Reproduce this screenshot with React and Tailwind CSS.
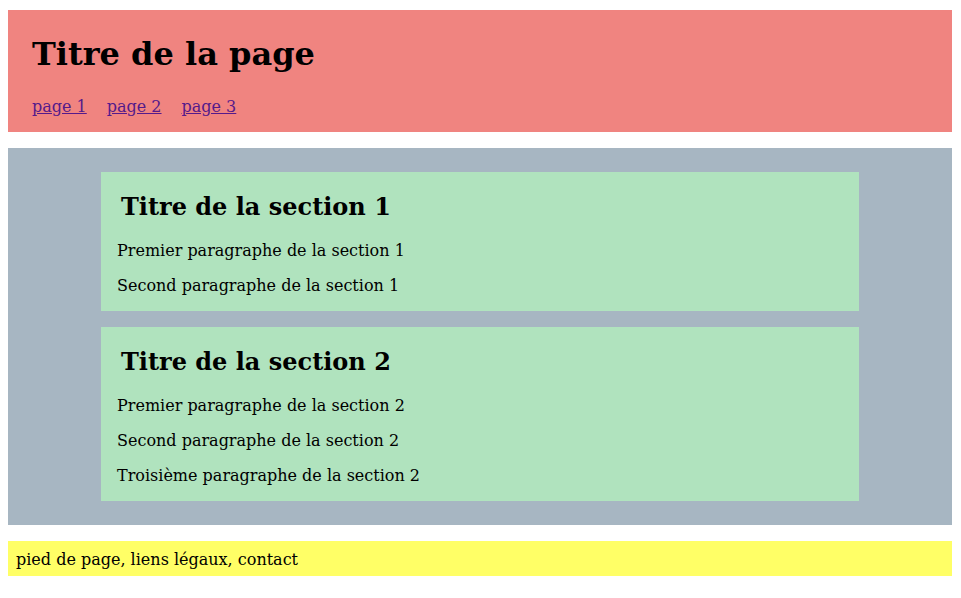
import React from 'react';

const sections = [
  {
    title: 'Titre de la section 1',
    paragraphs: ['Premier paragraphe de la section 1', 'Second paragraphe de la section 1'],
  },
  {
    title: 'Titre de la section 2',
    paragraphs: [
      'Premier paragraphe de la section 2',
      'Second paragraphe de la section 2',
      'Troisième paragraphe de la section 2',
    ],
  },
];

const Section = ({ title, paragraphs }) => (
  <section className="bg-[#b0e3be] px-4 pt-[21px] pb-4">
    <h2 className="pl-1 text-[24px] leading-[28px] font-bold mb-5">{title}</h2>
    <div className="flex flex-col gap-4">
      {paragraphs.map((p) => (
        <p key={p} className="text-[16px] leading-[19px]">{p}</p>
      ))}
    </div>
  </section>
);

export default function App() {
  return (
    <div className="bg-white min-h-[598px] pt-[10px] pl-2 pr-[9px] text-black font-['DejaVu_Serif',serif] flex flex-col gap-4">
      <header className="bg-[#f08480] px-6 pt-[26px] pb-4">
        <h1 className="text-[32px] leading-[37px] font-bold mb-6">Titre de la page</h1>
        <nav className="flex gap-5 text-[16px] leading-[19px]">
          <a href="#" className="text-[#551a8b] underline">page 1</a>
          <a href="#" className="text-[#551a8b] underline">page 2</a>
          <a href="#" className="text-[#551a8b] underline">page 3</a>
        </nav>
      </header>

      <main className="bg-[#a7b6c2] py-6">
        <div className="w-[758px] mx-auto flex flex-col gap-4">
          {sections.map((s) => (
            <Section key={s.title} title={s.title} paragraphs={s.paragraphs} />
          ))}
        </div>
      </main>

      <footer className="bg-[#ffff66] px-2 pt-[9px] pb-[7px] text-[16px] leading-[19px]">
        pied de page, liens légaux, contact
      </footer>
    </div>
  );
}
